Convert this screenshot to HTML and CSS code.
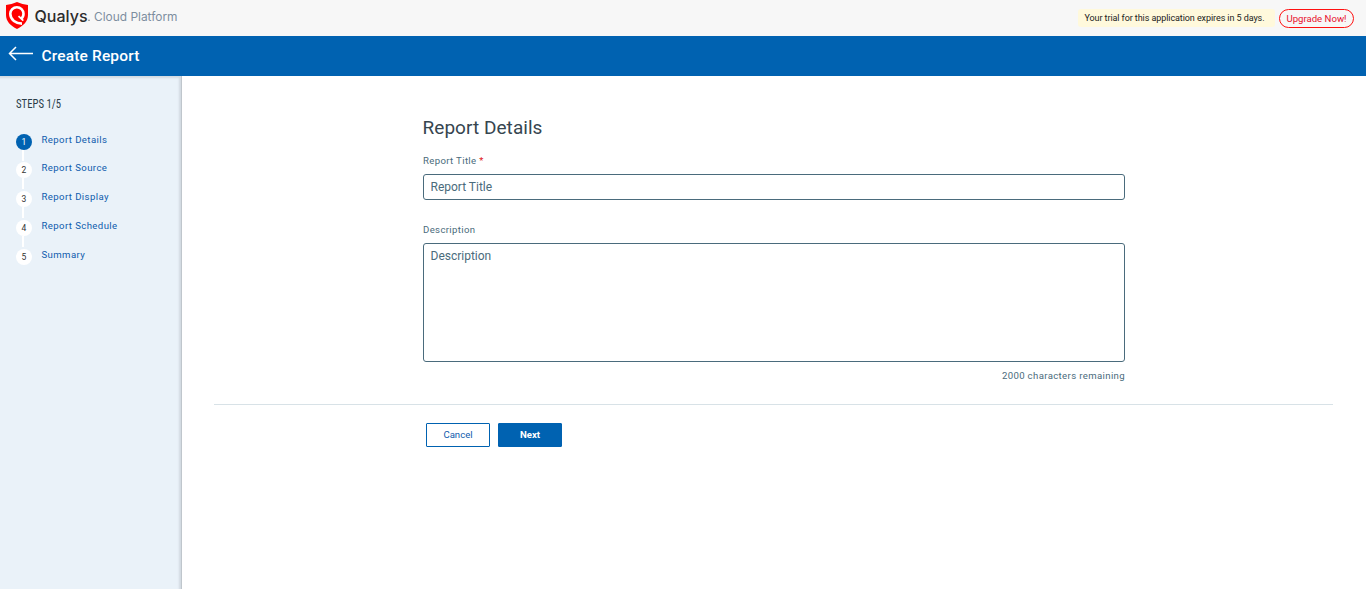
FILE: index.html
```html
<!DOCTYPE html>
<html lang="en">
<head>
<meta charset="utf-8">
<title>Create Report</title>
<link rel="stylesheet" href="styles.css">
</head>
<body>
<header class="topbar">
  <svg class="brand" width="184" height="36" viewBox="0 0 184 36">
    <path d="M17 2C20.500 3.500 24.500 4.500 28 5V15C28 21.500 23.500 25.500 17 29C10.500 25.500 6 21.500 6 15V5C9.500 4.500 13.500 3.500 17 2Z" fill="#f00"/>
    <path d="M22 23.600C16 23.600 10.300 19.700 10.300 13.800A6.600 6.600 0 0 1 23.500 13.800C23.500 16.200 22.600 17.800 21 19" fill="none" stroke="#fff" stroke-width="2.600"/>
    <path d="M18.500 16.200L23.300 20.600" fill="none" stroke="#fff" stroke-width="1.800"/>
    <text class="brand-name" x="34.500" y="21.500" textLength="53" lengthAdjust="spacingAndGlyphs">Qualys</text>
    <circle cx="89" cy="20.300" r=".8" fill="#777"/>
    <text class="brand-sub" x="94" y="21" textLength="83.500" lengthAdjust="spacingAndGlyphs">Cloud Platform</text>
  </svg>
  <div class="trial">
    <span class="trial-note">Your trial for this application expires in 5 days.</span>
    <a class="upgrade">Upgrade Now!</a>
  </div>
</header>
<div class="titlebar">
  <svg class="back" width="26" height="16" viewBox="0 0 26 16"><path d="M25 7.500H2M8 1L1.500 7.500L8 14" fill="none" stroke="#fff" stroke-width="1.500"/></svg>
  <h1 class="page-title">Create Report</h1>
</div>
<div class="layout">
  <aside class="sidebar">
    <svg class="steps-heading" width="60" height="18" viewBox="0 0 60 18"><text x="0" y="13" textLength="45" lengthAdjust="spacingAndGlyphs">STEPS 1/5</text></svg>
    <ol class="steps">
      <li class="step step-active"><span class="num">1</span><span class="step-name">Report Details</span></li>
      <li class="step"><span class="num">2</span><span class="step-name">Report Source</span></li>
      <li class="step"><span class="num">3</span><span class="step-name">Report Display</span></li>
      <li class="step"><span class="num">4</span><span class="step-name">Report Schedule</span></li>
      <li class="step"><span class="num">5</span><span class="step-name">Summary</span></li>
    </ol>
  </aside>
  <main class="content">
    <form class="form">
      <h2 class="form-title">Report Details</h2>
      <label class="label" for="title">Report Title <span class="required">*</span></label>
      <input class="field title-field" id="title" placeholder="Report Title">
      <label class="label" for="desc">Description</label>
      <textarea class="field desc-field" id="desc" placeholder="Description"></textarea>
      <div class="remaining">2000 characters remaining</div>
    </form>
    <div class="actions">
      <button class="btn">Cancel</button>
      <button class="btn btn-primary">Next</button>
    </div>
  </main>
</div>
</body>
</html>
```

FILE: styles.css
```css
* { box-sizing: border-box; }
body { margin: 0; height: 589px; overflow: hidden; display: flex; flex-direction: column; font-family: Roboto, sans-serif; background: #fff; color: #4a6b7c; }
.topbar { height: 36px; flex: none; display: flex; justify-content: space-between; background: #f7f7f7; }
.brand { display: block; }
.brand-name { font: 500 16px Inter, sans-serif; fill: #2c2c2c; }
.brand-sub { font: 11.500px Inter, sans-serif; fill: #7d8e9f; }
.trial { display: flex; align-items: flex-start; padding: 9px 12px 0 0; }
.trial-note { width: 197px; height: 18px; margin-right: 4px; padding-left: 6.500px; background: #fff9dc; border-radius: 3px; font-size: 9px; line-height: 18px; letter-spacing: -.08px; color: #222; white-space: nowrap; }
.upgrade { width: 75px; height: 19px; border: 1px solid #f11; border-radius: 10px; color: #e8112d; font-size: 9.600px; line-height: 18px; text-align: center; white-space: nowrap; }
.titlebar { height: 40px; flex: none; display: flex; align-items: flex-start; background: #0062b1; color: #fff; padding: 10px 0 0 8px; }
.page-title { margin: 0 0 0 7.500px; font-size: 15.500px; font-weight: 500; line-height: 20px; letter-spacing: .15px; }
.layout { flex: 1; display: flex; }
.sidebar { width: 182px; flex: none; padding: 19px 0 0 16px; background: #eaf2f9; border-right: 1px solid #bfc6cc; box-shadow: inset -2px 2px 2px #d2dae1; }
.steps-heading { display: block; }
.steps-heading text { font: 400 12.500px "Roboto Condensed", Roboto, sans-serif; fill: #2b3d49; }
.steps { list-style: none; margin: 21px 0 0; padding: 0; }
.step { height: 29px; display: flex; position: relative; }
.step-active { height: 28px; }
.step:not(:last-child)::after { content: ""; position: absolute; left: 6px; top: 16px; width: 2px; height: 11px; background: #fff; }
.num { width: 16px; height: 16px; margin-right: 9.500px; border-radius: 50%; background: #fff; color: #333; font-size: 8.500px; line-height: 17px; text-align: center; }
.step-active .num { background: #0062b1; color: #fff; }
.step-name { margin-top: -2px; height: 16px; font-size: 9.600px; line-height: 16px; letter-spacing: .4px; color: #0f5cad; }
.content { flex: 1; padding: 40px 33px 0 32px; }
.form { width: 702px; margin-left: 209px; display: flex; flex-direction: column; }
.form-title { margin: 0 0 14px -.5px; font-size: 19px; font-weight: 400; line-height: 24px; letter-spacing: .05px; color: #36454f; }
.label { height: 20px; font-size: 9.600px; line-height: 14px; letter-spacing: .35px; }
.required { color: #e02020; }
.field { display: block; width: 702px; margin: 0; border: 1px solid #4a6b7c; border-radius: 3px; background: #fff; font: 12px/16px Roboto, sans-serif; letter-spacing: 0; resize: none; outline: 0; }
.field::placeholder { color: #4a6b7c; opacity: 1; }
.title-field { height: 26px; padding: 0 6.500px; margin-bottom: 23px; }
.desc-field { height: 119px; padding: 4px 6.500px; }
.remaining { margin-top: 7px; height: 14px; font-size: 9.600px; line-height: 14px; letter-spacing: .36px; text-align: right; }
.actions { margin-top: 21px; padding: 18px 0 0 212px; border-top: 1px solid #d8e2e7; display: flex; gap: 8px; }
.btn { width: 64px; height: 24px; padding: 0 0 1px; border: 1px solid #0062b1; border-radius: 1px; background: #fff; color: #0f5cad; font: 400 9.600px Roboto, sans-serif; }
.btn-primary { background: #0062b1; color: #fff; font-weight: 700; }
```
